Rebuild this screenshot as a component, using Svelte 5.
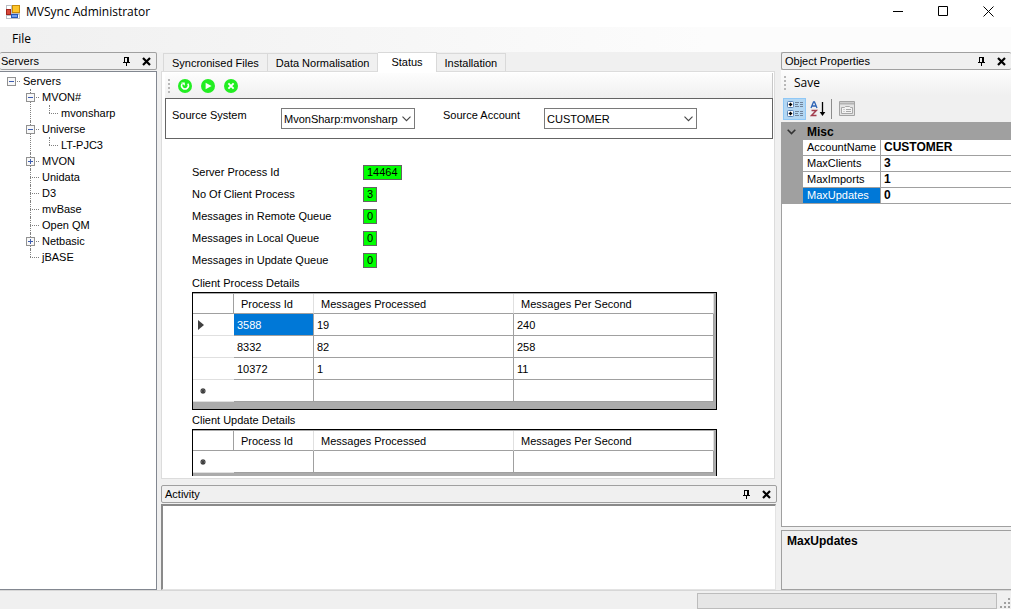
<script lang="ts">
	type TreeNode = { name: string; open?: boolean; children?: TreeNode[] };

	let tree = $state<TreeNode[]>([
		{
			name: 'Servers',
			open: true,
			children: [
				{ name: 'MVON#', open: true, children: [{ name: 'mvonsharp' }] },
				{ name: 'Universe', open: true, children: [{ name: 'LT-PJC3' }] },
				{ name: 'MVON', open: false, children: [] },
				{ name: 'Unidata' },
				{ name: 'D3' },
				{ name: 'mvBase' },
				{ name: 'Open QM' },
				{ name: 'Netbasic', open: false, children: [] },
				{ name: 'jBASE' }
			]
		}
	]);

	const tabs = ['Syncronised Files', 'Data Normalisation', 'Status', 'Installation'];
	let activeTab = $state('Status');

	let system = $state('MvonSharp:mvonsharp');
	let account = $state('CUSTOMER');

	const counters = [
		{ label: 'Server Process Id', value: 14464 },
		{ label: 'No Of Client Process', value: 3 },
		{ label: 'Messages in Remote Queue', value: 0 },
		{ label: 'Messages in Local Queue', value: 0 },
		{ label: 'Messages in Update Queue', value: 0 }
	];

	const processes = [
		{ id: 3588, processed: 19, perSecond: 240 },
		{ id: 8332, processed: 82, perSecond: 258 },
		{ id: 10372, processed: 1, perSecond: 11 }
	];
	let selectedId = $state(3588);

	let props = $state([
		{ name: 'AccountName', value: 'CUSTOMER' },
		{ name: 'MaxClients', value: '3' },
		{ name: 'MaxImports', value: '1' },
		{ name: 'MaxUpdates', value: '0' }
	]);
	let selectedProp = $state('MaxUpdates');
</script>

{#snippet panelHeader(title: string)}
	<header class="panel-header">
		<h2>{title}</h2>
		<button aria-label="Auto hide {title}">
			<svg width="9" height="11" viewBox="0 0 9 11" shape-rendering="crispEdges">
				<path d="M2 1h5v5H2z M1 6h7v1H1z M4 7h1v3H4z" fill="#000" />
				<path d="M3 2h2v4H3z" fill="#f0f0f0" />
			</svg>
		</button>
		<button aria-label="Close {title}">
			<svg width="9" height="9" viewBox="0 0 9 9">
				<path d="M1 1l7 7M8 1l-7 7" stroke="#000" stroke-width="2.2" />
			</svg>
		</button>
	</header>
{/snippet}

{#snippet branch(nodes: TreeNode[])}
	<ul>
		{#each nodes as node}
			<li>
				<div class="node">
					{#if node.children}
						<button
							class="toggle"
							aria-label="{node.open ? 'Collapse' : 'Expand'} {node.name}"
							onclick={() => (node.open = !node.open)}
						>
							<svg width="9" height="9" viewBox="0 0 9 9" shape-rendering="crispEdges">
								<path d="M.5 .5h8v8h-8z" fill="#f8f8f8" stroke="#919191" />
								<path d="M2 4h5v1H2z" fill="#3b5bb0" />
								{#if !node.open}
									<path d="M4 2h1v5H4z" fill="#3b5bb0" />
								{/if}
							</svg>
						</button>
					{/if}
					<span>{node.name}</span>
				</div>
				{#if node.open && node.children?.length}
					{@render branch(node.children)}
				{/if}
			</li>
		{/each}
	</ul>
{/snippet}

{#snippet processTable(rows: typeof processes, label: string)}
	<div class="grid">
		<table aria-label={label}>
			<thead>
				<tr>
					<th class="row-head"></th>
					<th class="id">Process Id</th>
					<th>Messages Processed</th>
					<th>Messages Per Second</th>
				</tr>
			</thead>
			<tbody>
				{#each rows as row}
					<tr onclick={() => (selectedId = row.id)}>
						<td class="row-head">
							{#if row.id === selectedId}
								<svg width="6" height="10" viewBox="0 0 6 10"><path d="M0 0l6 5-6 5z" fill="#404040" /></svg>
							{/if}
						</td>
						<td class="id" class:selected={row.id === selectedId}>{row.id}</td>
						<td>{row.processed}</td>
						<td>{row.perSecond}</td>
					</tr>
				{/each}
				<tr>
					<td class="row-head">
						<svg width="10" height="8" viewBox="0 0 10 8">
							<path d="M5 1v6M2 4h6M3 2l4 4M7 2L3 6" stroke="#404040" stroke-width="1.2" />
						</svg>
					</td>
					<td class="id"></td>
					<td></td>
					<td></td>
				</tr>
			</tbody>
		</table>
	</div>
{/snippet}

<div class="window">
	<header class="title-bar">
		<svg width="14" height="14" viewBox="0 0 14 14" shape-rendering="crispEdges">
			<path d="M0 0h14v14H0z" fill="#b9bec4" />
			<path d="M1 1h4v3H1z M1 11h4v2H1z M12 10h1v3h-1z" fill="#fff" />
			<path d="M0 4h5v6H0z" fill="#a3241b" />
			<path d="M1 5h3v4H1z" fill="#d8493a" />
			<path d="M6 0h8v8H6z" fill="#c78a08" />
			<path d="M7 1h6v6H7z" fill="#fcc52b" />
			<path d="M5 9h7v4H5z" fill="#2458b8" />
			<path d="M6 10h5v2H6z" fill="#6f9df0" />
		</svg>
		<h1>MVSync Administrator</h1>
		<button aria-label="Minimize">
			<svg width="11" height="11" viewBox="0 0 11 11"><path d="M0 5.5h10" stroke="#000" /></svg>
		</button>
		<button aria-label="Maximize">
			<svg width="11" height="11" viewBox="0 0 11 11"><path d="M.5 .5h9v9h-9z" fill="none" stroke="#000" /></svg>
		</button>
		<button aria-label="Close">
			<svg width="11" height="11" viewBox="0 0 11 11"><path d="M.5 .5l10 10M10.5 .5l-10 10" stroke="#000" /></svg>
		</button>
	</header>

	<nav class="menu">
		<button>File</button>
	</nav>

	<div class="dock">
		<aside class="side servers">
			{@render panelHeader('Servers')}
			<div class="tree">
				{@render branch(tree)}
			</div>
		</aside>

		<main>
			<div class="tabs" role="tablist">
				{#each tabs as tab}
					<button role="tab" aria-selected={tab === activeTab} class:active={tab === activeTab} onclick={() => (activeTab = tab)}>
						{tab}
					</button>
				{/each}
			</div>
			<section class="page">
				<div class="toolbar">
					<i class="grip"></i>
					<button aria-label="Restart">
						<svg width="14" height="14" viewBox="0 0 14 14">
							<circle cx="7" cy="7" r="7" fill="#22ee22" />
							<path d="M4.2 4.6A3.4 3.4 0 1 0 9.8 4.6" fill="none" stroke="#fff" stroke-width="1.5" />
							<path d="M3.2 3.4h3.6v3.4z" fill="#fff" />
						</svg>
					</button>
					<button aria-label="Start">
						<svg width="14" height="14" viewBox="0 0 14 14">
							<circle cx="7" cy="7" r="7" fill="#22ee22" />
							<path d="M4.6 3.8L10.6 7l-6 3.2z" fill="#fff" />
						</svg>
					</button>
					<button aria-label="Stop">
						<svg width="14" height="14" viewBox="0 0 14 14">
							<circle cx="7" cy="7" r="7" fill="#22ee22" />
							<path d="M4.4 4.4l5.2 5.2M9.6 4.4L4.4 9.6" stroke="#fff" stroke-width="1.9" />
						</svg>
					</button>
				</div>

				<div class="source">
					<label for="system">Source System</label>
					<div class="combo system">
						<select id="system" bind:value={system}>
							<option>MvonSharp:mvonsharp</option>
						</select>
						<svg width="9" height="6" viewBox="0 0 9 6"><path d="M.5 .7l4 4 4-4" fill="none" stroke="#444" stroke-width="1.1" /></svg>
					</div>
					<label for="account">Source Account</label>
					<div class="combo account">
						<select id="account" bind:value={account}>
							<option>CUSTOMER</option>
						</select>
						<svg width="9" height="6" viewBox="0 0 9 6"><path d="M.5 .7l4 4 4-4" fill="none" stroke="#444" stroke-width="1.1" /></svg>
					</div>
				</div>

				<div class="status">
					<dl>
						{#each counters as c}
							<dt>{c.label}</dt>
							<dd><span>{c.value}</span></dd>
						{/each}
					</dl>
					<h3>Client Process Details</h3>
					{@render processTable(processes, 'Client Process Details')}
					<h3>Client Update Details</h3>
					{@render processTable([], 'Client Update Details')}
				</div>
			</section>

			<section class="activity">
				{@render panelHeader('Activity')}
				<textarea aria-label="Activity" readonly></textarea>
			</section>
		</main>

		<aside class="side properties">
			{@render panelHeader('Object Properties')}
			<div class="toolbar">
				<i class="grip"></i>
				<button class="save">Save</button>
			</div>
			<div class="view-bar">
				<button class="on" aria-label="Categorized">
					<svg width="16" height="16" viewBox="0 0 16 16">
						<rect x=".5" y=".5" width="6" height="6" rx="1" fill="#fff" stroke="#5a84b8" />
						<rect x=".5" y="9.5" width="6" height="6" rx="1" fill="#fff" stroke="#5a84b8" />
						<path d="M2 3h3v1H2z M3 2h1v3H3z M2 12h3v1H2z M3 11h1v3H3z" fill="#000" stroke="#000" stroke-width=".5" />
						<path d="M8 1.5h4M8 3.5h3M8 5.5h4M8 10.5h4M8 12.5h3M8 14.5h4M13 1.5h3M13 3.5h3M13 5.5h3M13 10.5h3M13 12.5h3M13 14.5h3" stroke="#71849b" />
					</svg>
				</button>
				<button aria-label="Alphabetical">
					<svg width="16" height="16" viewBox="0 0 16 16">
						<path d="M1 7l2.5-6h1L7 7M2 5h4" fill="none" stroke="#2b63b5" stroke-width="1.3" />
						<path d="M1.5 9.5h4.8L1.5 14.5h5" fill="none" stroke="#a33e4e" stroke-width="1.5" />
						<path d="M12.5 1v12" stroke="#000" stroke-width="1.3" />
						<path d="M9.7 11h5.6l-2.8 4z" fill="#000" />
					</svg>
				</button>
				<i class="divider"></i>
				<button aria-label="Property Pages" disabled>
					<svg width="16" height="16" viewBox="0 0 16 16">
						<path d="M.5 .5h15v14H.5z" fill="#e4e4e4" stroke="#a3a3a3" />
						<path d="M1 2.5h14" stroke="#b3b3b3" stroke-width="2" />
						<path d="M2.5 6.5h3l1-1h4l1 1h2v6h-11z" fill="#f3f3f3" stroke="#a8a8a8" />
						<path d="M4.5 8.5h1M7 8.5h5M4.5 10.5h1M7 10.5h5" stroke="#a8a8a8" />
					</svg>
				</button>
			</div>
			<div class="prop-grid">
				<button class="category">
					<svg width="9" height="6" viewBox="0 0 9 6"><path d="M.7 .7l3.8 3.8L8.3 .7" fill="none" stroke="#333" stroke-width="1.6" /></svg>
					Misc
				</button>
				<table aria-label="Misc">
					<tbody>
						{#each props as p}
							<tr class:selected={p.name === selectedProp}>
								<td class="gutter"></td>
								<th><label for={p.name}>{p.name}</label></th>
								<td><input id={p.name} bind:value={p.value} onfocus={() => (selectedProp = p.name)} /></td>
							</tr>
						{/each}
					</tbody>
				</table>
			</div>
			<div class="description">{selectedProp}</div>
		</aside>
	</div>

	<footer>
		<div class="progress" role="progressbar" aria-label="Progress" aria-valuenow="0"></div>
		<svg width="11" height="11" viewBox="0 0 11 11" shape-rendering="crispEdges">
			<path d="M8 0h2v2H8z M8 4h2v2H8z M4 4h2v2H4z M8 8h2v2H8z M4 8h2v2H4z M0 8h2v2H0z" fill="#a0a0a0" />
		</svg>
	</footer>
</div>

<style>
	:global(body) {
		background: #f0f0f0;
	}

	.window {
		display: flex;
		flex-direction: column;
		height: 100vh;
		overflow: hidden;
		background: #f0f0f0;
		color: #000;
		font: 11px/16px 'Liberation Sans', Arial, sans-serif;
	}

	.window * {
		box-sizing: border-box;
	}

	button {
		border: 0;
		padding: 0;
		background: none;
		color: inherit;
		font: inherit;
	}

	svg {
		display: block;
		flex: none;
	}

	h1,
	h2,
	h3 {
		margin: 0;
		font-size: inherit;
		font-weight: normal;
	}

	.title-bar {
		display: flex;
		align-items: center;
		flex: none;
		height: 27px;
		padding: 0 0 4px 6px;
		background: #fff;
	}

	.title-bar h1 {
		flex: 1;
		margin-left: 6px;
		font: 12px/16px 'Open Sans', sans-serif;
	}

	.title-bar button {
		display: grid;
		place-items: center;
		width: 45px;
		height: 22px;
	}

	.menu {
		flex: none;
		height: 25px;
		padding: 4px 12px;
		background: linear-gradient(90deg, #f0f0f0, #fcfcfc 70%);
	}

	.menu button,
	.save {
		font: 12px/16px 'Open Sans', sans-serif;
	}

	.dock {
		display: flex;
		flex: 1;
		min-height: 0;
		gap: 4px;
	}

	.side {
		display: flex;
		flex-direction: column;
		flex: none;
	}

	.servers {
		width: 157px;
	}

	.properties {
		width: 230px;
	}

	.panel-header {
		display: flex;
		align-items: center;
		flex: none;
		height: 18px;
		padding: 0 5px 0 3px;
		border: 1px solid #a0a0a0;
		border-radius: 2px;
	}

	.servers .panel-header {
		border-left: 0;
		padding-left: 1px;
	}

	.properties .panel-header {
		border-right: 0;
	}

	.panel-header h2 {
		flex: 1;
	}

	.panel-header button {
		margin-left: 11px;
	}

	.tree {
		flex: 1;
		margin-top: 1px;
		padding: 1px 0 0 7px;
		border: 1px solid #828790;
		border-left: 0;
		background: #fff;
	}

	.tree ul {
		margin: 0;
		padding: 0;
		list-style: none;
	}

	.tree li {
		position: relative;
	}

	.tree li ul {
		padding-left: 19px;
	}

	.tree li li::before {
		content: '';
		position: absolute;
		top: 0;
		bottom: 0;
		left: 4px;
		border-left: 1px dotted #808080;
	}

	.tree li li:last-child::before {
		bottom: auto;
		height: 8px;
	}

	.node {
		position: relative;
		display: flex;
		align-items: center;
		height: 16px;
	}

	.node::before {
		content: '';
		position: absolute;
		top: 8px;
		left: 4px;
		width: 9px;
		border-top: 1px dotted #808080;
	}

	.toggle {
		position: relative;
		z-index: 1;
		width: 9px;
		margin-right: -9px;
	}

	.node span {
		margin-left: 16px;
	}

	main {
		display: flex;
		flex-direction: column;
		flex: 1;
		min-width: 0;
	}

	.tabs {
		display: flex;
		align-items: flex-end;
		flex: none;
		height: 19px;
		padding-left: 2px;
	}

	.tabs button {
		height: 18px;
		padding: 0 8px;
		border: 1px solid #d9d9d9;
		border-width: 1px 1px 0 0;
	}

	.tabs button:first-child {
		border-left-width: 1px;
	}

	.tabs .active {
		z-index: 1;
		height: 20px;
		margin-bottom: -1px;
		padding: 0 13px 2px;
		background: #fff;
	}

	.page {
		display: flex;
		flex-direction: column;
		flex: 1;
		min-height: 0;
		margin-right: 2px;
		padding: 1px 1px 2px 3px;
		border: 1px solid #dcdcdc;
		background: #fff;
	}

	.toolbar {
		display: flex;
		align-items: center;
		flex: none;
		height: 25px;
		padding-left: 3px;
		background: linear-gradient(#fdfdfd, #f0f0f0);
	}

	.page .toolbar {
		border-right: 1px solid #c8c8c8;
	}

	.page .toolbar button {
		margin-right: 9px;
	}

	.grip {
		width: 2px;
		height: 14px;
		margin-right: 8px;
		background: repeating-linear-gradient(#b8b8b8 0 2px, transparent 2px 4px);
	}

	.source {
		display: flex;
		flex: none;
		height: 41px;
		padding: 9px 6px;
		border: 1px solid #646464;
		line-height: 14px;
	}

	.source label[for='system'] {
		width: 109px;
	}

	.source label[for='account'] {
		width: 101px;
	}

	.combo {
		position: relative;
		height: 21px;
	}

	.system {
		width: 134px;
		margin-right: 28px;
	}

	.account {
		width: 153px;
	}

	.combo select {
		width: 100%;
		height: 100%;
		padding: 0 2px;
		border: 1px solid #7a7a7a;
		border-radius: 0;
		background: #fff;
		color: #000;
		font: inherit;
		appearance: none;
	}

	.combo svg {
		position: absolute;
		top: 8px;
		right: 4px;
		pointer-events: none;
	}

	.status {
		flex: 1;
		min-height: 0;
		padding: 22px 0 0 27px;
		overflow: hidden;
	}

	.status dl {
		display: grid;
		grid-template-columns: 171px auto;
		grid-auto-rows: 22px;
		align-items: center;
		justify-content: start;
		margin: 0 0 4px;
	}

	.status dd {
		margin: 0;
	}

	.status dd span {
		display: block;
		width: fit-content;
		padding: 0 3px;
		border: 1px solid #646464;
		background: #0f0;
		line-height: 13px;
	}

	.status h3 {
		line-height: 17px;
	}

	.grid {
		width: 525px;
		height: 118px;
		margin-bottom: 2px;
		border: 1px solid #000;
		background: #ababab;
	}

	.grid table {
		width: 521px;
		margin-top: 1px;
		border-collapse: separate;
		border-spacing: 0;
		table-layout: fixed;
		background: #fff;
	}

	.grid th {
		height: 20px;
		padding: 0 7px;
		border: 1px solid #e0e0e0;
		border-width: 0 1px 0 0;
		border-bottom: 1px solid #a0a0a0;
		font-weight: normal;
		text-align: left;
	}

	.grid td {
		height: 22px;
		padding: 0 3px;
		border: 1px solid #a0a0a0;
		border-width: 0 1px 1px 0;
	}

	.grid .row-head {
		width: 41px;
		padding-left: 5px;
	}

	.grid th.row-head {
		border-right-color: #a0a0a0;
	}

	.grid td.row-head {
		border-right: 0;
		border-bottom-color: #e0e0e0;
	}

	.grid .id {
		width: 80px;
	}

	.grid .selected {
		background: #0078d7;
		color: #fff;
	}

	.activity {
		display: flex;
		flex-direction: column;
		flex: none;
		height: 111px;
		padding-top: 6px;
	}

	.activity textarea {
		flex: 1;
		margin: 1px 1px 0 0;
		border: 1px solid #e3e3e3;
		border-top: 2px solid #8a8a8a;
		border-left: 2px solid #8a8a8a;
		background: #fff;
		font: inherit;
		resize: none;
		outline: none;
	}

	.properties .toolbar {
		height: 26px;
	}

	.view-bar {
		display: flex;
		align-items: center;
		flex: none;
		height: 26px;
		padding-left: 2px;
	}

	.view-bar button {
		display: grid;
		place-items: center;
		width: 23px;
		height: 22px;
	}

	.view-bar .on {
		border: 1px solid #90c8f6;
		background: #b3d7f3;
	}

	.divider {
		width: 1px;
		height: 20px;
		margin: 0 3px 0 2px;
		background: #8c8c8c;
	}

	.prop-grid {
		flex: 1;
		min-height: 0;
		border: 1px solid #a0a0a0;
		border-right: 0;
		background: #fff;
	}

	.category {
		display: flex;
		align-items: center;
		gap: 11px;
		width: 100%;
		height: 17px;
		padding-left: 5px;
		background: #a0a0a0;
		font: bold 12px/16px 'Liberation Sans', Arial, sans-serif;
	}

	.prop-grid table {
		width: 100%;
		border-collapse: separate;
		border-spacing: 0;
		table-layout: fixed;
	}

	.prop-grid td,
	.prop-grid th {
		height: 16px;
		padding: 0;
		border-bottom: 1px solid #a0a0a0;
		font-weight: normal;
		line-height: 15px;
		text-align: left;
	}

	.prop-grid .gutter {
		width: 21px;
		background: #a0a0a0;
	}

	.prop-grid th {
		width: 78px;
		padding-left: 4px;
		border-right: 1px solid #a0a0a0;
	}

	.prop-grid input {
		display: block;
		width: 100%;
		height: 15px;
		padding: 0 3px;
		border: 0;
		background: none;
		font: bold 12px/15px 'Liberation Sans', Arial, sans-serif;
		outline: none;
	}

	.prop-grid .selected th {
		background: #0078d7;
		color: #fff;
	}

	.description {
		flex: none;
		height: 60px;
		margin-top: 3px;
		padding: 2px 5px;
		border: 1px solid #a0a0a0;
		border-right: 0;
		font: bold 12px/16px 'Liberation Sans', Arial, sans-serif;
	}

	footer {
		display: flex;
		align-items: flex-end;
		justify-content: flex-end;
		flex: none;
		gap: 3px;
		height: 19px;
		border-top: 1px solid #d7d7d7;
	}

	.progress {
		width: 300px;
		height: 16px;
		border: 1px solid #bcbcbc;
		background: #e6e6e6;
	}
</style>
